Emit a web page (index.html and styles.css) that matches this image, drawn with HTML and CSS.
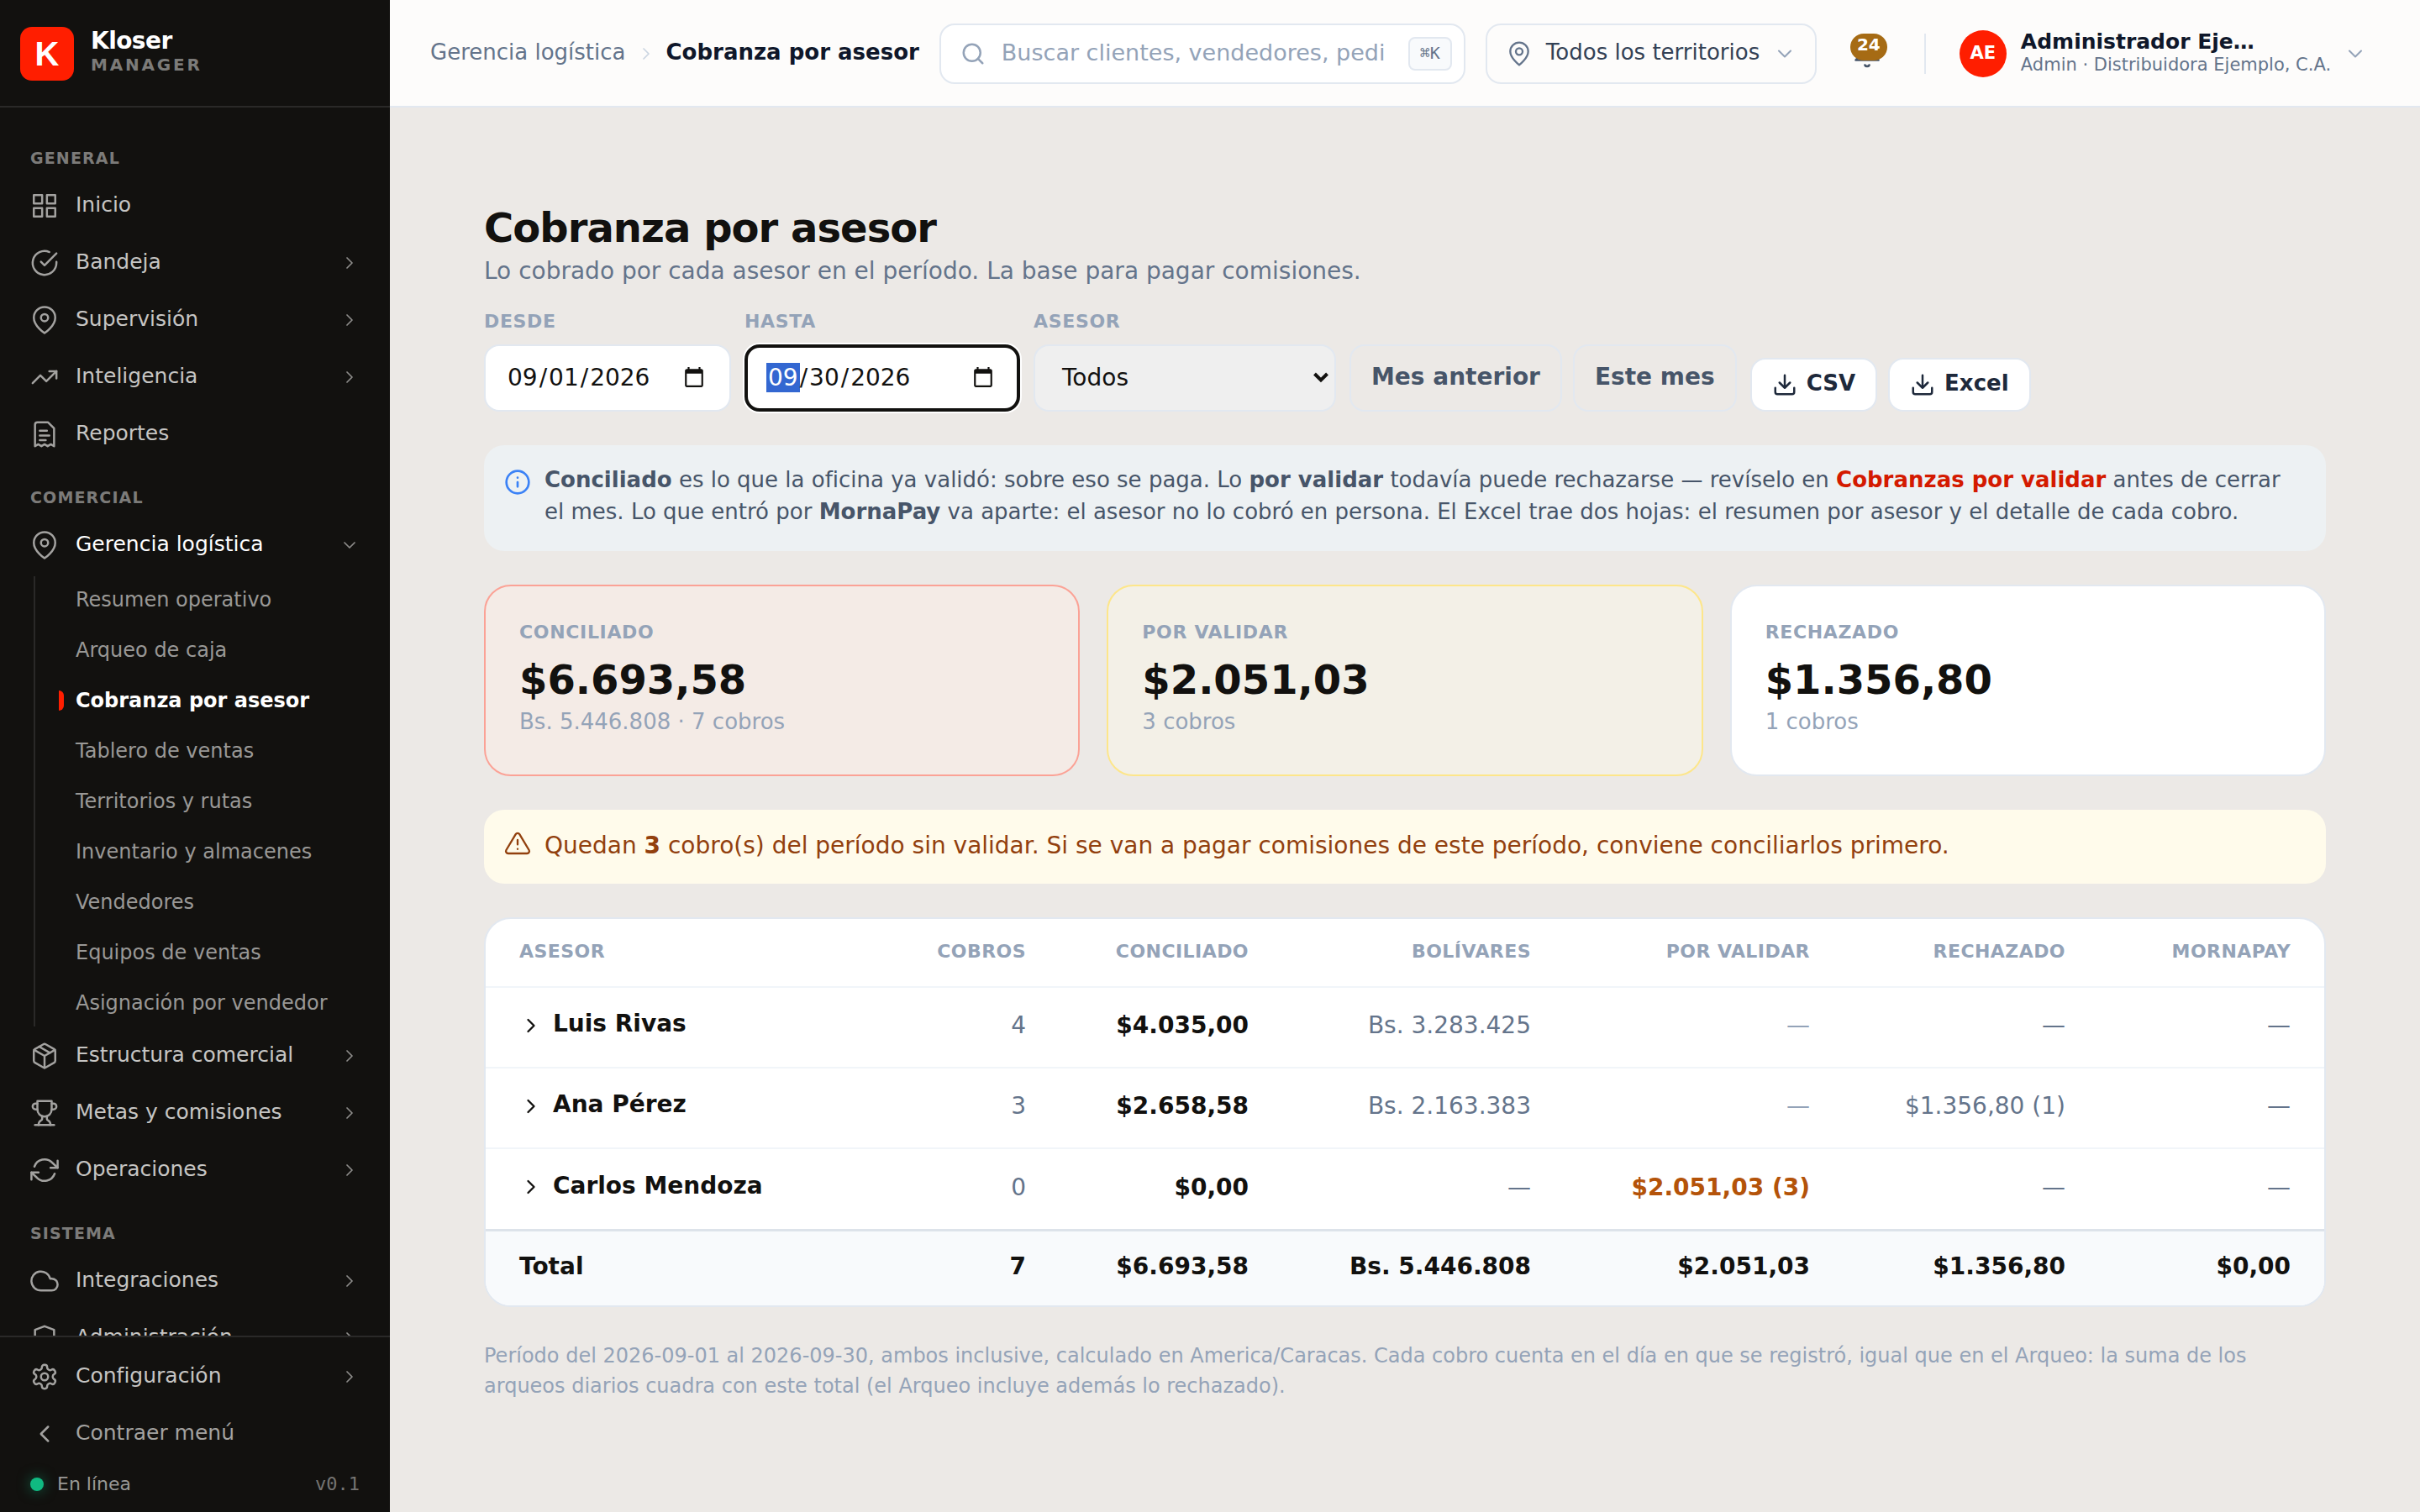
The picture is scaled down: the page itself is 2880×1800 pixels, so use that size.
FILE: index.html
```html
<!DOCTYPE html>
<html lang="es">
<head>
  <meta charset="UTF-8" />
  <meta name="viewport" content="width=device-width, initial-scale=1" />
  <title>Kloser Manager – Cobranza por asesor</title>
  <link rel="stylesheet" href="styles.css">
</head>
<body>

  <!-- Icon set -->
  <svg class="sprite" aria-hidden="true">
    <symbol id="i-grid" viewBox="0 0 24 24"><rect x="3" y="3" width="7" height="7"/><rect x="14" y="3" width="7" height="7"/><rect x="14" y="14" width="7" height="7"/><rect x="3" y="14" width="7" height="7"/></symbol>
    <symbol id="i-check" viewBox="0 0 24 24"><path d="M22 11.08V12a10 10 0 1 1-5.93-9.14"/><path d="M22 4 12 14.01l-3-3"/></symbol>
    <symbol id="i-pin" viewBox="0 0 24 24"><path d="M20 10c0 6-8 12-8 12s-8-6-8-12a8 8 0 0 1 16 0z"/><circle cx="12" cy="10" r="3"/></symbol>
    <symbol id="i-pin-wide" viewBox="0 0 24 24"><path d="M21 10c0 7-9 13-9 13s-9-6-9-13a9 9 0 0 1 18 0z"/><circle cx="12" cy="10" r="3"/></symbol>
    <symbol id="i-trend" viewBox="0 0 24 24"><path d="M22 7 13.5 15.5 8.5 10.5 2 17"/><path d="M16 7h6v6"/></symbol>
    <symbol id="i-receipt" viewBox="0 0 24 24"><path d="M4 22V4a2 2 0 0 1 2-2h9l5 5v15l-2.700-1.600L14.600 22 12 20.400 9.400 22l-2.700-1.600z"/><path d="M8 9h6M8 13h8M8 17h5"/></symbol>
    <symbol id="i-box" viewBox="0 0 24 24"><path d="M16.500 9.400 7.500 4.210"/><path d="M21 16V8a2 2 0 0 0-1-1.730l-7-4a2 2 0 0 0-2 0l-7 4A2 2 0 0 0 3 8v8a2 2 0 0 0 1 1.730l7 4a2 2 0 0 0 2 0l7-4A2 2 0 0 0 21 16z"/><path d="M3.270 6.960 12 12.010l8.730-5.050M12 22.080V12"/></symbol>
    <symbol id="i-trophy" viewBox="0 0 24 24"><path d="M6 9H4.500a2.500 2.500 0 0 1 0-5H6"/><path d="M18 9h1.500a2.500 2.500 0 0 0 0-5H18"/><path d="M4 22h16"/><path d="M10 14.660V17c0 .550-.470.980-.970 1.210C7.850 18.750 7 20.240 7 22"/><path d="M14 14.660V17c0 .550.470.980.970 1.210C16.150 18.750 17 20.240 17 22"/><path d="M18 2H6v7a6 6 0 0 0 12 0V2z"/></symbol>
    <symbol id="i-refresh" viewBox="0 0 24 24"><path d="M23 4v6h-6M1 20v-6h6"/><path d="M3.510 9a9 9 0 0 1 14.850-3.360L23 10M1 14l4.640 4.360A9 9 0 0 0 20.490 15"/></symbol>
    <symbol id="i-cloud" viewBox="0 0 24 24"><path d="M18 10h-1.260A8 8 0 1 0 9 20h9a5 5 0 0 0 0-10z"/></symbol>
    <symbol id="i-shield" viewBox="0 0 24 24"><path d="M12 22s8-4 8-10V5l-8-3-8 3v7c0 6 8 10 8 10z"/></symbol>
    <symbol id="i-gear" viewBox="0 0 24 24"><path d="M12.220 2h-.440a2 2 0 0 0-2 2v.180a2 2 0 0 1-1 1.730l-.430.250a2 2 0 0 1-2 0l-.150-.080a2 2 0 0 0-2.730.730l-.220.380a2 2 0 0 0 .730 2.730l.150.100a2 2 0 0 1 1 1.720v.510a2 2 0 0 1-1 1.740l-.150.090a2 2 0 0 0-.730 2.730l.220.380a2 2 0 0 0 2.730.730l.150-.080a2 2 0 0 1 2 0l.430.250a2 2 0 0 1 1 1.730V20a2 2 0 0 0 2 2h.440a2 2 0 0 0 2-2v-.180a2 2 0 0 1 1-1.730l.430-.250a2 2 0 0 1 2 0l.150.080a2 2 0 0 0 2.730-.730l.220-.390a2 2 0 0 0-.730-2.730l-.150-.080a2 2 0 0 1-1-1.740v-.500a2 2 0 0 1 1-1.740l.150-.090a2 2 0 0 0 .730-2.730l-.220-.380a2 2 0 0 0-2.730-.730l-.150.080a2 2 0 0 1-2 0l-.430-.250a2 2 0 0 1-1-1.730V4a2 2 0 0 0-2-2z"/><circle cx="12" cy="12" r="3"/></symbol>
    <symbol id="i-left" viewBox="0 0 24 24"><path d="m15 18-6-6 6-6"/></symbol>
    <symbol id="i-right" viewBox="0 0 24 24"><path d="m9 18 6-6-6-6"/></symbol>
    <symbol id="i-down" viewBox="0 0 24 24"><path d="m6 9 6 6 6-6"/></symbol>
    <symbol id="i-search" viewBox="0 0 24 24"><circle cx="11" cy="11" r="8"/><path d="m21 21-4.350-4.350"/></symbol>
    <symbol id="i-bell" viewBox="0 0 24 24"><path d="M6 8a6 6 0 0 1 12 0c0 7 3 9 3 9H3s3-2 3-9"/><path d="M10.300 21a1.940 1.940 0 0 0 3.400 0"/></symbol>
    <symbol id="i-download" viewBox="0 0 24 24"><path d="M21 15v4a2 2 0 0 1-2 2H5a2 2 0 0 1-2-2v-4"/><path d="m7 10 5 5 5-5M12 15V3"/></symbol>
    <symbol id="i-info" viewBox="0 0 24 24"><circle cx="12" cy="12" r="10"/><path d="M12 16v-4M12 8h.01"/></symbol>
    <symbol id="i-alert" viewBox="0 0 24 24"><path d="M10.290 3.860 1.820 18a2 2 0 0 0 1.710 3h16.940a2 2 0 0 0 1.710-3L13.710 3.860a2 2 0 0 0-3.420 0z"/><path d="M12 9v4M12 17h.01"/></symbol>
    <symbol id="i-calendar" viewBox="0 0 24 24"><path d="M20 3h-1V1h-2v2H7V1H5v2H4c-1.100 0-2 .900-2 2v16c0 1.100.900 2 2 2h16c1.100 0 2-.900 2-2V5c0-1.100-.900-2-2-2zm0 18H4V8h16v13z"/></symbol>
  </svg>

  <div class="app">
    <aside class="sidebar">
      <div class="brand">
        <div class="logo">K</div>
        <div class="brand-text">
          <div class="brand-name">Kloser</div>
          <div class="brand-sub">MANAGER</div>
        </div>
      </div>

      <nav class="nav">
        <div class="nav-title">GENERAL</div>
        <a class="nav-item"><svg class="icon"><use href="#i-grid"/></svg><span>Inicio</span></a>
        <a class="nav-item"><svg class="icon"><use href="#i-check"/></svg><span>Bandeja</span><svg class="chev"><use href="#i-right"/></svg></a>
        <a class="nav-item"><svg class="icon"><use href="#i-pin-wide"/></svg><span>Supervisión</span><svg class="chev"><use href="#i-right"/></svg></a>
        <a class="nav-item"><svg class="icon"><use href="#i-trend"/></svg><span>Inteligencia</span><svg class="chev"><use href="#i-right"/></svg></a>
        <a class="nav-item"><svg class="icon"><use href="#i-receipt"/></svg><span>Reportes</span></a>

        <div class="nav-title">COMERCIAL</div>
        <a class="nav-item open"><svg class="icon"><use href="#i-pin-wide"/></svg><span>Gerencia logística</span><svg class="chev"><use href="#i-down"/></svg></a>
        <div class="subnav">
          <a>Resumen operativo</a>
          <a>Arqueo de caja</a>
          <a class="active">Cobranza por asesor</a>
          <a>Tablero de ventas</a>
          <a>Territorios y rutas</a>
          <a>Inventario y almacenes</a>
          <a>Vendedores</a>
          <a>Equipos de ventas</a>
          <a>Asignación por vendedor</a>
        </div>
        <a class="nav-item"><svg class="icon"><use href="#i-box"/></svg><span>Estructura comercial</span><svg class="chev"><use href="#i-right"/></svg></a>
        <a class="nav-item"><svg class="icon"><use href="#i-trophy"/></svg><span>Metas y comisiones</span><svg class="chev"><use href="#i-right"/></svg></a>
        <a class="nav-item"><svg class="icon"><use href="#i-refresh"/></svg><span>Operaciones</span><svg class="chev"><use href="#i-right"/></svg></a>

        <div class="nav-title">SISTEMA</div>
        <a class="nav-item"><svg class="icon"><use href="#i-cloud"/></svg><span>Integraciones</span><svg class="chev"><use href="#i-right"/></svg></a>
        <a class="nav-item"><svg class="icon"><use href="#i-shield"/></svg><span>Administración</span><svg class="chev"><use href="#i-right"/></svg></a>
      </nav>

      <div class="side-foot">
        <a class="nav-item"><svg class="icon"><use href="#i-gear"/></svg><span>Configuración</span><svg class="chev"><use href="#i-right"/></svg></a>
        <a class="nav-item collapse"><svg class="icon"><use href="#i-left"/></svg><span>Contraer menú</span></a>
        <div class="status">
          <i class="dot"></i>
          <span>En línea</span>
          <span class="version">v0.1</span>
        </div>
      </div>
    </aside>

    <div class="main">
      <header class="topbar">
        <div class="crumbs">
          <span>Gerencia logística</span>
          <svg class="crumb-sep"><use href="#i-right"/></svg>
          <strong>Cobranza por asesor</strong>
        </div>
        <div class="search">
          <svg class="search-icon"><use href="#i-search"/></svg>
          <span class="search-text">Buscar clientes, vendedores, pedi</span>
          <kbd>⌘K</kbd>
        </div>
        <div class="territory">
          <svg class="pin"><use href="#i-pin"/></svg>
          <span>Todos los territorios</span>
          <svg class="caret"><use href="#i-down"/></svg>
        </div>
        <div class="bell">
          <svg><use href="#i-bell"/></svg>
          <span class="badge">24</span>
        </div>
        <div class="divider"></div>
        <div class="user">
          <div class="avatar">AE</div>
          <div class="user-text">
            <div class="user-name">Administrador Eje…</div>
            <div class="user-role">Admin · Distribuidora Ejemplo, C.A.</div>
          </div>
          <svg class="caret"><use href="#i-down"/></svg>
        </div>
      </header>

      <main class="content">
        <h1>Cobranza por asesor</h1>
        <p class="subtitle">Lo cobrado por cada asesor en el período. La base para pagar comisiones.</p>

        <div class="filters">
          <div class="field desde">
            <label>DESDE</label>
            <div class="control"><span class="date"><b>09</b>/<b>01</b>/<b>2026</b></span><svg class="cal"><use href="#i-calendar"/></svg></div>
          </div>
          <div class="field hasta">
            <label>HASTA</label>
            <div class="control focused"><span class="date"><b class="selected">09</b>/<b>30</b>/<b>2026</b></span><svg class="cal"><use href="#i-calendar"/></svg></div>
          </div>
          <div class="field asesor">
            <label>ASESOR</label>
            <div class="control select"><span>Todos</span><svg class="arrow" viewBox="0 0 20 14"><path d="M2.500 3 10 10.500 17.500 3"/></svg></div>
          </div>
          <div class="btn-group">
            <button class="btn-ghost">Mes anterior</button>
            <button class="btn-ghost">Este mes</button>
          </div>
          <div class="btn-group">
            <button class="btn-export"><svg><use href="#i-download"/></svg><span>CSV</span></button>
            <button class="btn-export"><svg><use href="#i-download"/></svg><span>Excel</span></button>
          </div>
        </div>

        <div class="note info">
          <svg><use href="#i-info"/></svg>
          <p><strong>Conciliado</strong> es lo que la oficina ya validó: sobre eso se paga. Lo <strong>por validar</strong> todavía puede rechazarse — revíselo en <a>Cobranzas por validar</a> antes de cerrar el mes. Lo que entró por <strong>MornaPay</strong> va aparte: el asesor no lo cobró en persona. El Excel trae dos hojas: el resumen por asesor y el detalle de cada cobro.</p>
        </div>

        <div class="cards">
          <div class="card red">
            <div class="card-label">CONCILIADO</div>
            <div class="card-value">$6.693,58</div>
            <div class="card-sub">Bs. 5.446.808 · 7 cobros</div>
          </div>
          <div class="card yellow">
            <div class="card-label">POR VALIDAR</div>
            <div class="card-value">$2.051,03</div>
            <div class="card-sub">3 cobros</div>
          </div>
          <div class="card">
            <div class="card-label">RECHAZADO</div>
            <div class="card-value">$1.356,80</div>
            <div class="card-sub">1 cobros</div>
          </div>
        </div>

        <div class="note warning">
          <svg><use href="#i-alert"/></svg>
          <p>Quedan <strong>3</strong> cobro(s) del período sin validar. Si se van a pagar comisiones de este período, conviene conciliarlos primero.</p>
        </div>

        <div class="table-box">
          <table>
            <colgroup>
              <col class="c-asesor"><col class="c-cobros"><col class="c-conc"><col class="c-bs"><col class="c-val"><col class="c-rech"><col class="c-morna">
            </colgroup>
            <thead>
              <tr><th>ASESOR</th><th>COBROS</th><th>CONCILIADO</th><th>BOLÍVARES</th><th>POR VALIDAR</th><th>RECHAZADO</th><th>MORNAPAY</th></tr>
            </thead>
            <tbody>
              <tr>
                <td><div class="name"><svg><use href="#i-right"/></svg><span>Luis Rivas</span></div></td>
                <td>4</td><td class="strong">$4.035,00</td><td>Bs. 3.283.425</td><td class="faint">—</td><td>—</td><td>—</td>
              </tr>
              <tr>
                <td><div class="name"><svg><use href="#i-right"/></svg><span>Ana Pérez</span></div></td>
                <td>3</td><td class="strong">$2.658,58</td><td>Bs. 2.163.383</td><td class="faint">—</td><td>$1.356,80 (1)</td><td>—</td>
              </tr>
              <tr>
                <td><div class="name"><svg><use href="#i-right"/></svg><span>Carlos Mendoza</span></div></td>
                <td>0</td><td class="strong">$0,00</td><td>—</td><td class="pending">$2.051,03 (3)</td><td>—</td><td>—</td>
              </tr>
            </tbody>
            <tfoot>
              <tr><td>Total</td><td>7</td><td>$6.693,58</td><td>Bs. 5.446.808</td><td>$2.051,03</td><td>$1.356,80</td><td>$0,00</td></tr>
            </tfoot>
          </table>
        </div>

        <p class="footnote">Período del 2026-09-01 al 2026-09-30, ambos inclusive, calculado en America/Caracas. Cada cobro cuenta en el día en que se registró, igual que en el Arqueo: la suma de los arqueos diarios cuadra con este total (el Arqueo incluye además lo rechazado).</p>
      </main>
    </div>
  </div>

</body>
</html>
```
FILE: styles.css
```css
* {
  box-sizing: border-box;
}
body {
  margin: 0;
  font-family: "DejaVu Sans", sans-serif;
  font-size: 28px;
  color: #12110f;
  background: #ece9e6;
}
svg {
  fill: none;
  stroke: currentColor;
  stroke-width: 1.75;
  stroke-linecap: round;
  stroke-linejoin: round;
  flex-shrink: 0;
}
.sprite {
  display: none;
}
h1, p {
  margin: 0;
}
.app {
  display: flex;
  height: 1800px;
  overflow: hidden;
}

/* Sidebar */
.sidebar {
  width: 464px;
  flex-shrink: 0;
  display: flex;
  flex-direction: column;
  background: #12110f;
  color: #c6c5c3;
}
.brand {
  height: 128px;
  flex-shrink: 0;
  display: flex;
  align-items: center;
  gap: 20px;
  padding: 2px 24px 0;
  border-bottom: 2px solid #2a2928;
}
.logo {
  width: 64px;
  height: 64px;
  border-radius: 14px;
  background: #ff1e00;
  color: white;
  font: bold 40px/64px "Liberation Sans", sans-serif;
  text-align: center;
}
.brand-text {
  padding-bottom: 6px;
}
.brand-name {
  font-size: 28px;
  line-height: 32px;
  font-weight: bold;
  letter-spacing: -0.02em;
  color: white;
}
.brand-sub {
  font-size: 20px;
  line-height: 24px;
  font-weight: bold;
  letter-spacing: 0.14em;
  color: #7c7b79;
}
.nav {
  flex: 1;
  min-height: 0;
  overflow: hidden;
  padding-top: 17px;
}
.nav-title {
  height: 64px;
  padding: 32px 36px 0;
  font-size: 19px;
  line-height: 22px;
  font-weight: bold;
  letter-spacing: 0.06em;
  color: #7c7b79;
}
.nav-item {
  display: flex;
  align-items: center;
  height: 64px;
  margin-top: 4px;
  padding: 0 36px;
  gap: 20px;
  font-size: 25px;
}
.nav-item span {
  flex: 1;
  padding-bottom: 3px;
}
.nav-item .icon {
  width: 34px;
  height: 34px;
  color: #a3a2a0;
}
.nav-item .chev {
  width: 24px;
  height: 24px;
  color: #8d8c8a;
}
.nav-item.open {
  color: white;
}
.subnav {
  display: flex;
  flex-direction: column;
  gap: 4px;
  margin: 5px 0 -1px 40px;
  border-left: 2px solid #2a2928;
}
.subnav a {
  position: relative;
  height: 56px;
  padding-left: 48px;
  font-size: 24px;
  line-height: 56px;
  color: #999896;
}
.subnav .active {
  color: white;
  font-weight: bold;
}
.subnav .active::before {
  content: "";
  position: absolute;
  left: 28px;
  top: 16px;
  width: 6px;
  height: 24px;
  border-radius: 0 6px 6px 0;
  background: #ff1e00;
}
.side-foot {
  height: 210px;
  flex-shrink: 0;
  padding-top: 11px;
  border-top: 2px solid #2a2928;
}
.collapse {
  color: #a3a2a0;
}
.status {
  display: flex;
  align-items: center;
  gap: 16px;
  height: 56px;
  padding: 0 36px;
  font-size: 22px;
  color: #999896;
}
.status span {
  padding-bottom: 1px;
}
.dot {
  width: 16px;
  height: 16px;
  border-radius: 50%;
  background: #10b981;
  box-shadow: 0 0 16px rgba(16, 185, 129, 0.5);
}
.status .version {
  margin-left: auto;
  font-family: "DejaVu Sans Mono", monospace;
  color: #757472;
}

/* Top bar */
.main {
  flex: 1;
  min-width: 0;
}
.topbar {
  display: flex;
  align-items: center;
  height: 128px;
  padding: 2px 48px 0;
  border-bottom: 2px solid #e2e8f0;
  background: #fdfcfb;
  font-size: 26px;
}
.crumbs {
  display: flex;
  align-items: center;
  gap: 12px;
  color: #64748b;
}
.crumbs span, .crumbs strong {
  padding-bottom: 5px;
}
.crumbs strong {
  color: #0f172a;
}
.crumb-sep {
  width: 24px;
  height: 24px;
  color: #cbd5e1;
}
.search {
  display: flex;
  align-items: center;
  width: 626px;
  height: 72px;
  margin-left: 24px;
  padding: 0 14px 0 23px;
  border: 2px solid #e2e8f0;
  border-radius: 18px;
  background: white;
}
.search-icon {
  width: 30px;
  height: 30px;
  stroke-width: 2;
  color: #94a3b8;
}
.search-text {
  margin-left: 19px;
  white-space: nowrap;
  font-size: 27px;
  padding-bottom: 3px;
  color: #94a3b8;
}
kbd {
  width: 52px;
  height: 40px;
  margin-left: auto;
  border: 2px solid #e2e8f0;
  border-radius: 8px;
  background: #f8fafc;
  font: 20px/34px "DejaVu Sans Mono", monospace;
  text-align: center;
  color: #64748b;
}
.territory {
  display: flex;
  align-items: center;
  width: 394px;
  height: 72px;
  margin-left: 24px;
  padding: 0 22px;
  border: 2px solid #e2e8f0;
  border-radius: 18px;
  color: #334155;
}
.territory span {
  flex: 1;
  padding: 0 0 5px 16px;
}
.territory .pin {
  width: 32px;
  height: 32px;
  color: #64748b;
}
.caret {
  width: 28px;
  height: 28px;
  color: #94a3b8;
}
.bell {
  position: relative;
  width: 36px;
  height: 36px;
  margin-left: 42px;
  color: #475569;
}
.bell svg {
  width: 36px;
  height: 36px;
}
.badge {
  position: absolute;
  left: -2px;
  top: -6px;
  width: 44px;
  height: 32px;
  border-radius: 16px;
  background: #a66b14;
  color: white;
  font-size: 20px;
  line-height: 27px;
  font-weight: bold;
  text-align: center;
}
.divider {
  width: 2px;
  height: 48px;
  margin: 0 40px 0 50px;
  background: #e2e8f0;
}
.user {
  display: flex;
  align-items: center;
}
.avatar {
  width: 56px;
  height: 56px;
  border-radius: 50%;
  background: #ff1e00;
  color: white;
  font-size: 21px;
  line-height: 54px;
  font-weight: bold;
  text-align: center;
}
.user-text {
  width: 372px;
  margin: 0 12px 2px 17px;
}
.user-name {
  font-size: 25px;
  line-height: 28px;
  font-weight: bold;
  color: #0f172a;
}
.user-role {
  font-size: 21px;
  line-height: 27px;
  white-space: nowrap;
  color: #64748b;
}

/* Page */
.content {
  padding: 112px;
}
h1 {
  font-size: 48px;
  line-height: 62px;
  letter-spacing: -0.02em;
}
.subtitle {
  line-height: 42px;
  color: #64748b;
}
.filters {
  display: flex;
  align-items: flex-end;
  gap: 16px;
  margin-top: 22px;
}
.field label {
  display: block;
  margin-bottom: 11px;
  font-size: 22px;
  line-height: 33px;
  font-weight: bold;
  letter-spacing: 0.03em;
  color: #94a3b8;
}
.desde {
  width: 294px;
}
.hasta {
  width: 328px;
}
.asesor {
  width: 360px;
}
.control {
  display: flex;
  align-items: center;
  justify-content: space-between;
  height: 80px;
  padding: 0 29px 2px 24px;
  border: 2px solid #e2e8f0;
  border-radius: 18px;
  background: white;
}
.control.focused {
  border: 4px solid #12110f;
  padding: 0 27px 2px 22px;
  box-shadow: 0 0 0 2px white;
}
.date b {
  display: inline-block;
  padding: 1px 2px;
  font-weight: normal;
}
.date .selected {
  background: #3367d1;
  color: white;
}
.cal {
  width: 26px;
  height: 26px;
  fill: #12110f;
  stroke: none;
}
.control.select {
  padding: 0 6px 2px 32px;
  background: #efefef;
}
.arrow {
  width: 20px;
  height: 14px;
  stroke-width: 4;
  stroke-linecap: butt;
  stroke-linejoin: miter;
}
.btn-group {
  display: flex;
  align-items: flex-end;
  gap: 13px;
}
button {
  font-family: inherit;
  font-weight: bold;
  border: 2px solid #e2e8f0;
}
.btn-ghost {
  height: 80px;
  padding: 0 24px 3px;
  border-radius: 18px;
  background: none;
  font-size: 28px;
  color: #475569;
}
.btn-export {
  display: flex;
  align-items: center;
  gap: 11px;
  height: 64px;
  padding: 0 24px;
  border-radius: 18px;
  background: white;
  font-size: 26px;
  color: #1e293b;
}
.btn-export span {
  padding-bottom: 5px;
}
.btn-export svg {
  width: 30px;
  height: 30px;
  stroke-width: 2;
}
.note {
  display: flex;
  gap: 16px;
  margin-top: 40px;
  padding: 22px 24px;
  border-radius: 24px;
}
.note svg {
  width: 32px;
  height: 32px;
}
.info {
  height: 126px;
  background: #edf1f3;
  font-size: 26px;
  line-height: 38px;
  color: #475569;
}
.info svg {
  margin-top: 6px;
  stroke-width: 2;
  color: #3b82f6;
}
.info a {
  font-weight: bold;
  color: #d41a00;
}
.warning {
  height: 88px;
  background: #fffbeb;
  line-height: 42px;
  color: #92400e;
}
.warning svg {
  margin-top: 2px;
}
.cards {
  display: grid;
  grid-template-columns: repeat(3, 1fr);
  gap: 32px;
  margin-top: 40px;
}
.card {
  height: 228px;
  padding: 38px 40px;
  border: 2px solid #e2e8f0;
  border-radius: 32px;
  background: white;
}
.card.red {
  border-color: #fba296;
  background: #f4ebe6;
}
.card.yellow {
  border-color: #fde68a;
  background: #f3f0e7;
}
.card-label {
  font-size: 22px;
  line-height: 33px;
  font-weight: bold;
  letter-spacing: 0.03em;
  color: #94a3b8;
}
.card-value {
  font-size: 48px;
  line-height: 62px;
  margin-top: 9px;
  font-weight: bold;
}
.card-sub {
  font-size: 26px;
  line-height: 39px;
  color: #94a3b8;
}

/* Table */
.table-box {
  margin-top: 40px;
  border: 2px solid #e2e8f0;
  border-radius: 32px;
  background: white;
  overflow: hidden;
}
table {
  width: 100%;
  table-layout: fixed;
  border-collapse: separate;
  border-spacing: 0;
}
.c-asesor { width: 489px; }
.c-cobros { width: 194px; }
.c-conc { width: 265px; }
.c-bs { width: 336px; }
.c-val { width: 332px; }
.c-rech { width: 304px; }
.c-morna { width: 268px; }
th, td {
  padding: 0 40px;
  text-align: right;
  white-space: nowrap;
}
th:first-child, td:first-child {
  text-align: left;
}
th {
  height: 82px;
  padding-bottom: 4px;
  border-bottom: 2px solid #f1f5f9;
  font-size: 22px;
  letter-spacing: 0.02em;
  color: #94a3b8;
}
td {
  height: 96px;
  padding-bottom: 5px;
  border-bottom: 2px solid #f1f5f9;
  color: #64748b;
}
tbody tr:last-child td {
  height: 95px;
  border-bottom: none;
}
.name {
  display: flex;
  align-items: center;
  gap: 12px;
  font-weight: bold;
  color: #12110f;
}
.name span {
  padding-bottom: 4px;
}
.name svg {
  width: 28px;
  height: 28px;
  stroke-width: 2;
}
.strong {
  font-weight: bold;
  color: #12110f;
}
.faint {
  color: #94a3b8;
}
.pending {
  font-weight: bold;
  color: #b45309;
}
tfoot td {
  height: 91px;
  border-top: 3px solid #dde3ea;
  border-bottom: none;
  background: #f8fafc;
  font-weight: bold;
  color: #12110f;
}
.footnote {
  margin-top: 40px;
  font-size: 24px;
  line-height: 36px;
  color: #94a3b8;
}
```
